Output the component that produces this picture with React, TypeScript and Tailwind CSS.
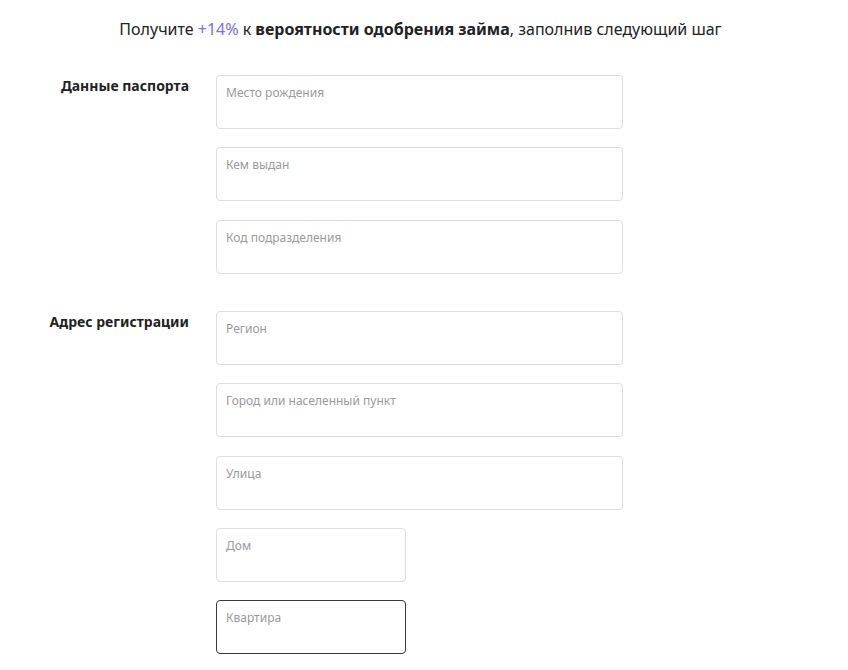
export default function App() {
  const Field = ({ label, small, focused }: { label: string; small?: boolean; focused?: boolean }) => (
    <div
      className={
        "h-[54px] rounded-[4px] border bg-white px-[9px] pt-[10px] " +
        (small ? "w-[190px] " : "w-[407px] ") +
        (focused ? "border-[#3a3a3a]" : "border-[#dedede]")
      }
    >
      <div className="text-[12px] leading-[14px] text-[#9a9a9a]">{label}</div>
    </div>
  );
  return (
    <div className="w-[848px] h-[670px] bg-white text-[#222]" style={{ fontFamily: '"Noto Sans", Arial, sans-serif' }}>
      <div className="pt-[17px] pr-[7px] text-center text-[16px] leading-[24px] text-[#222]">
        Получите <span className="text-[#7b6cf0]">+14%</span> к <span className="font-bold">вероятности одобрения займа</span>, заполнив следующий шаг
      </div>
      <div className="mt-[34px] flex">
        <div className="w-[189px] pt-[1px] text-right text-[14px] font-bold leading-[20px]">Данные паспорта</div>
        <div className="ml-[27px] flex flex-col gap-[18.4px]">
          <Field label="Место рождения" />
          <Field label="Кем выдан" />
          <Field label="Код подразделения" />
        </div>
      </div>
      <div className="mt-[37px] flex">
        <div className="w-[189px] pt-[1px] text-right text-[14px] font-bold leading-[20px]">Адрес регистрации</div>
        <div className="ml-[27px] flex flex-col gap-[18.4px]">
          <Field label="Регион" />
          <Field label="Город или населенный пункт" />
          <Field label="Улица" />
          <Field label="Дом" small />
          <Field label="Квартира" small focused />
        </div>
      </div>
    </div>
  );
}
